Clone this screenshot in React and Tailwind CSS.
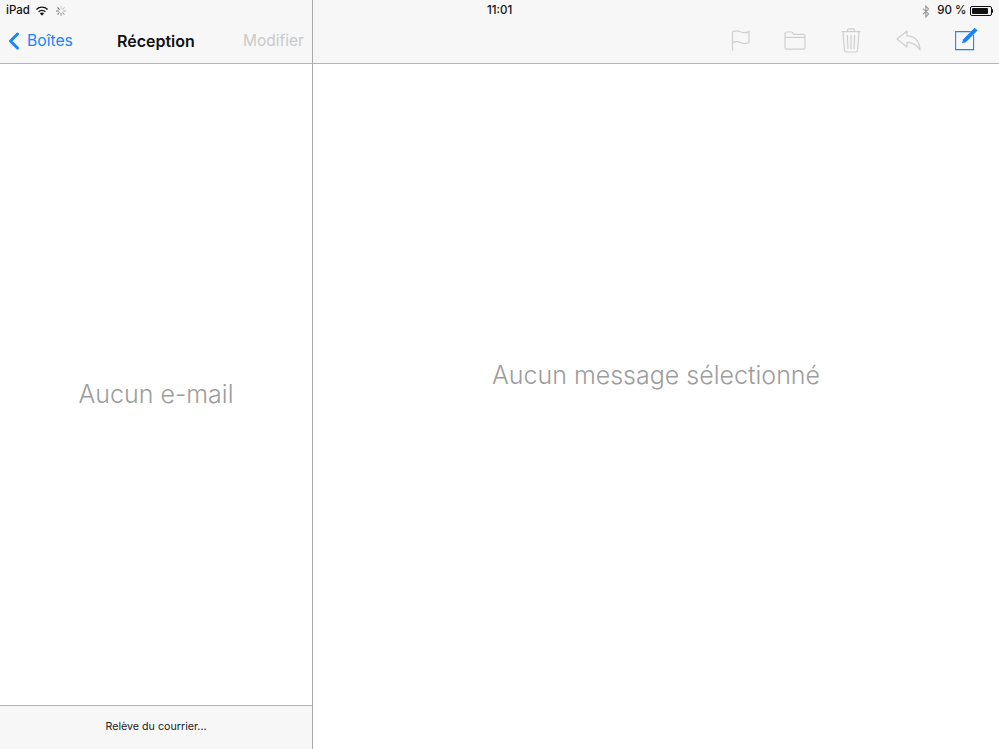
import { ChevronLeft } from 'lucide-react'

const font = { fontFamily: 'Inter, "Liberation Sans", sans-serif' }

function Wifi() {
  return (
    <svg width="14" height="10" viewBox="0 0 14 10" className="text-[#111]">
      <path d="M7 9.8 L4.9 7.3 A3.2 3.2 0 0 1 9.1 7.3 Z" fill="currentColor" />
      <path d="M3.6 5.8 A5 5 0 0 1 10.4 5.8" fill="none" stroke="currentColor" strokeWidth="1.4" />
      <path d="M1.4 3.4 A8 8 0 0 1 12.6 3.4" fill="none" stroke="currentColor" strokeWidth="1.4" />
    </svg>
  )
}

function Spinner() {
  const rays = [0, 45, 90, 135, 180, 225, 270, 315]
  return (
    <svg width="12" height="12" viewBox="0 0 12 12">
      {rays.map((r, i) => (
        <line key={r} x1="6" y1="1" x2="6" y2="4" stroke="#555" strokeOpacity={0.25 + i * 0.09} strokeWidth="1" transform={`rotate(${r} 6 6)`} />
      ))}
    </svg>
  )
}

function Bluetooth() {
  return (
    <svg width="8" height="13" viewBox="0 0 8 13" fill="none" stroke="#9a9a9a" strokeWidth="1.1">
      <path d="M1 3.6 L6.6 9 L3.8 12 V1 L6.6 4 L1 9.4" />
    </svg>
  )
}

function Battery() {
  return (
    <span className="flex items-center">
      <span className="w-[22px] h-[10px] border border-[#111] rounded-[2px] p-px flex">
        <span className="h-full w-[90%] bg-[#111] rounded-[1px]" />
      </span>
      <span className="w-[1.5px] h-[4px] bg-[#111] rounded-r-sm" />
    </span>
  )
}

function Flag() {
  return (
    <svg width="19" height="21" viewBox="0 0 19 21" fill="none" stroke="#cfcfcf" strokeWidth="1.2">
      <path d="M1.5 20.5 V2 C5 -0.2 8 1 10 2 C12.5 3.1 15 3 18 1.6 V12.5 C15 14 12.5 14 10 12.8 C8 11.8 5 11 1.5 12.6" />
    </svg>
  )
}

function Folder() {
  return (
    <svg width="22" height="19" viewBox="0 0 22 19" fill="none" stroke="#cfcfcf" strokeWidth="1.2">
      <path d="M1 17 V2.4 Q1 1 2.4 1 H7.4 Q8.4 1 9 2.2 L9.6 3.4 H19.6 Q21 3.4 21 4.8 V17 Q21 18.2 19.6 18.2 H2.4 Q1 18.2 1 17 Z" />
      <path d="M1 6.4 H21" />
    </svg>
  )
}

function Trash() {
  return (
    <svg width="20" height="25" viewBox="0 0 20 25" fill="none" stroke="#cfcfcf" strokeWidth="1.2">
      <path d="M0.5 3.6 H19.5" />
      <path d="M6.5 3.4 V2 Q6.5 0.8 7.8 0.8 H12.2 Q13.5 0.8 13.5 2 V3.4" />
      <path d="M2 3.8 L3.4 22 Q3.5 24 5.4 24 H14.6 Q16.5 24 16.6 22 L18 3.8" />
      <path d="M6.4 7 L7 21 M10 7 V21 M13.6 7 L13 21" />
    </svg>
  )
}

function Reply() {
  return (
    <svg width="25" height="21" viewBox="0 0 25 21" fill="none" stroke="#cfcfcf" strokeWidth="1.2" strokeLinejoin="round">
      <path d="M1 9 L11 1 V5.8 C18 6 23.4 10.4 24 20 C21 15 17 12.6 11 12.4 V17 Z" />
    </svg>
  )
}

function Compose() {
  return (
    <svg width="24" height="24" viewBox="0 0 24 24" fill="none">
      <path d="M15.6 4.6 H0.6 V22.6 H18.6 V8" stroke="#1a84ff" strokeWidth="1.1" />
      <path d="M8 12.4 L19.6 0.8 L22.6 3.4 L10.8 15.2 L7 16.2 Z" fill="#1a84ff" />
    </svg>
  )
}

export default function App() {
  return (
    <div className="w-[999px] h-[749px] flex bg-white overflow-hidden" style={font}>
      {/* Mailbox list */}
      <aside className="w-[313px] flex-shrink-0 h-full flex flex-col border-r border-[#a9a9a9]">
        <header className="h-[64px] flex-shrink-0 bg-[#f7f7f7] border-b border-[#b4b4b4] flex flex-col">
          <div className="h-[21px] pl-[6px] pt-px flex items-center text-[11.5px] font-medium text-[#111]">
            <span>iPad</span>
            <span className="ml-[5px]"><Wifi /></span>
            <span className="ml-[6px]"><Spinner /></span>
          </div>
          <div className="flex-1 flex items-center pb-[3px]">
            <ChevronLeft size={28} strokeWidth={2.6} className="text-[#1a84ff] -mr-[1px]" />
            <span className="text-[#1a84ff] text-[15.7px] w-[90px]">Boîtes</span>
            <span className="text-[#111] text-[16px] font-semibold w-[126px]">Réception</span>
            <span className="text-[#c9c9c9] text-[15.5px]">Modifier</span>
          </div>
        </header>
        <div className="flex-1 flex items-center justify-center pt-[20px]">
          <p className="text-[#9d9d9d] text-[25px] font-light">Aucun e-mail</p>
        </div>
        <footer className="h-[44px] flex-shrink-0 bg-[#f7f7f7] border-t border-[#b4b4b4] pb-px flex items-center justify-center text-[#222] text-[10.7px]">
          Relève du courrier...
        </footer>
      </aside>

      {/* Message pane */}
      <main className="flex-1 h-full flex flex-col">
        <header className="h-[64px] flex-shrink-0 bg-[#f7f7f7] border-b border-[#b4b4b4] flex flex-col">
          <div className="h-[21px] pl-[174px] pr-[6px] pt-px flex items-center text-[11.5px] font-medium text-[#111]">
            <span>11:01</span>
            <div className="ml-auto flex items-center">
              <Bluetooth />
              <span className="ml-[7px] mr-[3px]">90 %</span>
              <Battery />
            </div>
          </div>
          <div className="flex-1 flex items-center justify-end pr-[20px] pb-[4px]">
            <Flag />
            <span className="ml-[34px]"><Folder /></span>
            <span className="ml-[35px]"><Trash /></span>
            <span className="ml-[35px]"><Reply /></span>
            <span className="ml-[34px] -mt-[3px]"><Compose /></span>
          </div>
        </header>
        <div className="flex-1 flex items-center justify-center pb-[62px]">
          <p className="text-[#9d9d9d] text-[25px] font-light">Aucun message sélectionné</p>
        </div>
      </main>
    </div>
  )
}
